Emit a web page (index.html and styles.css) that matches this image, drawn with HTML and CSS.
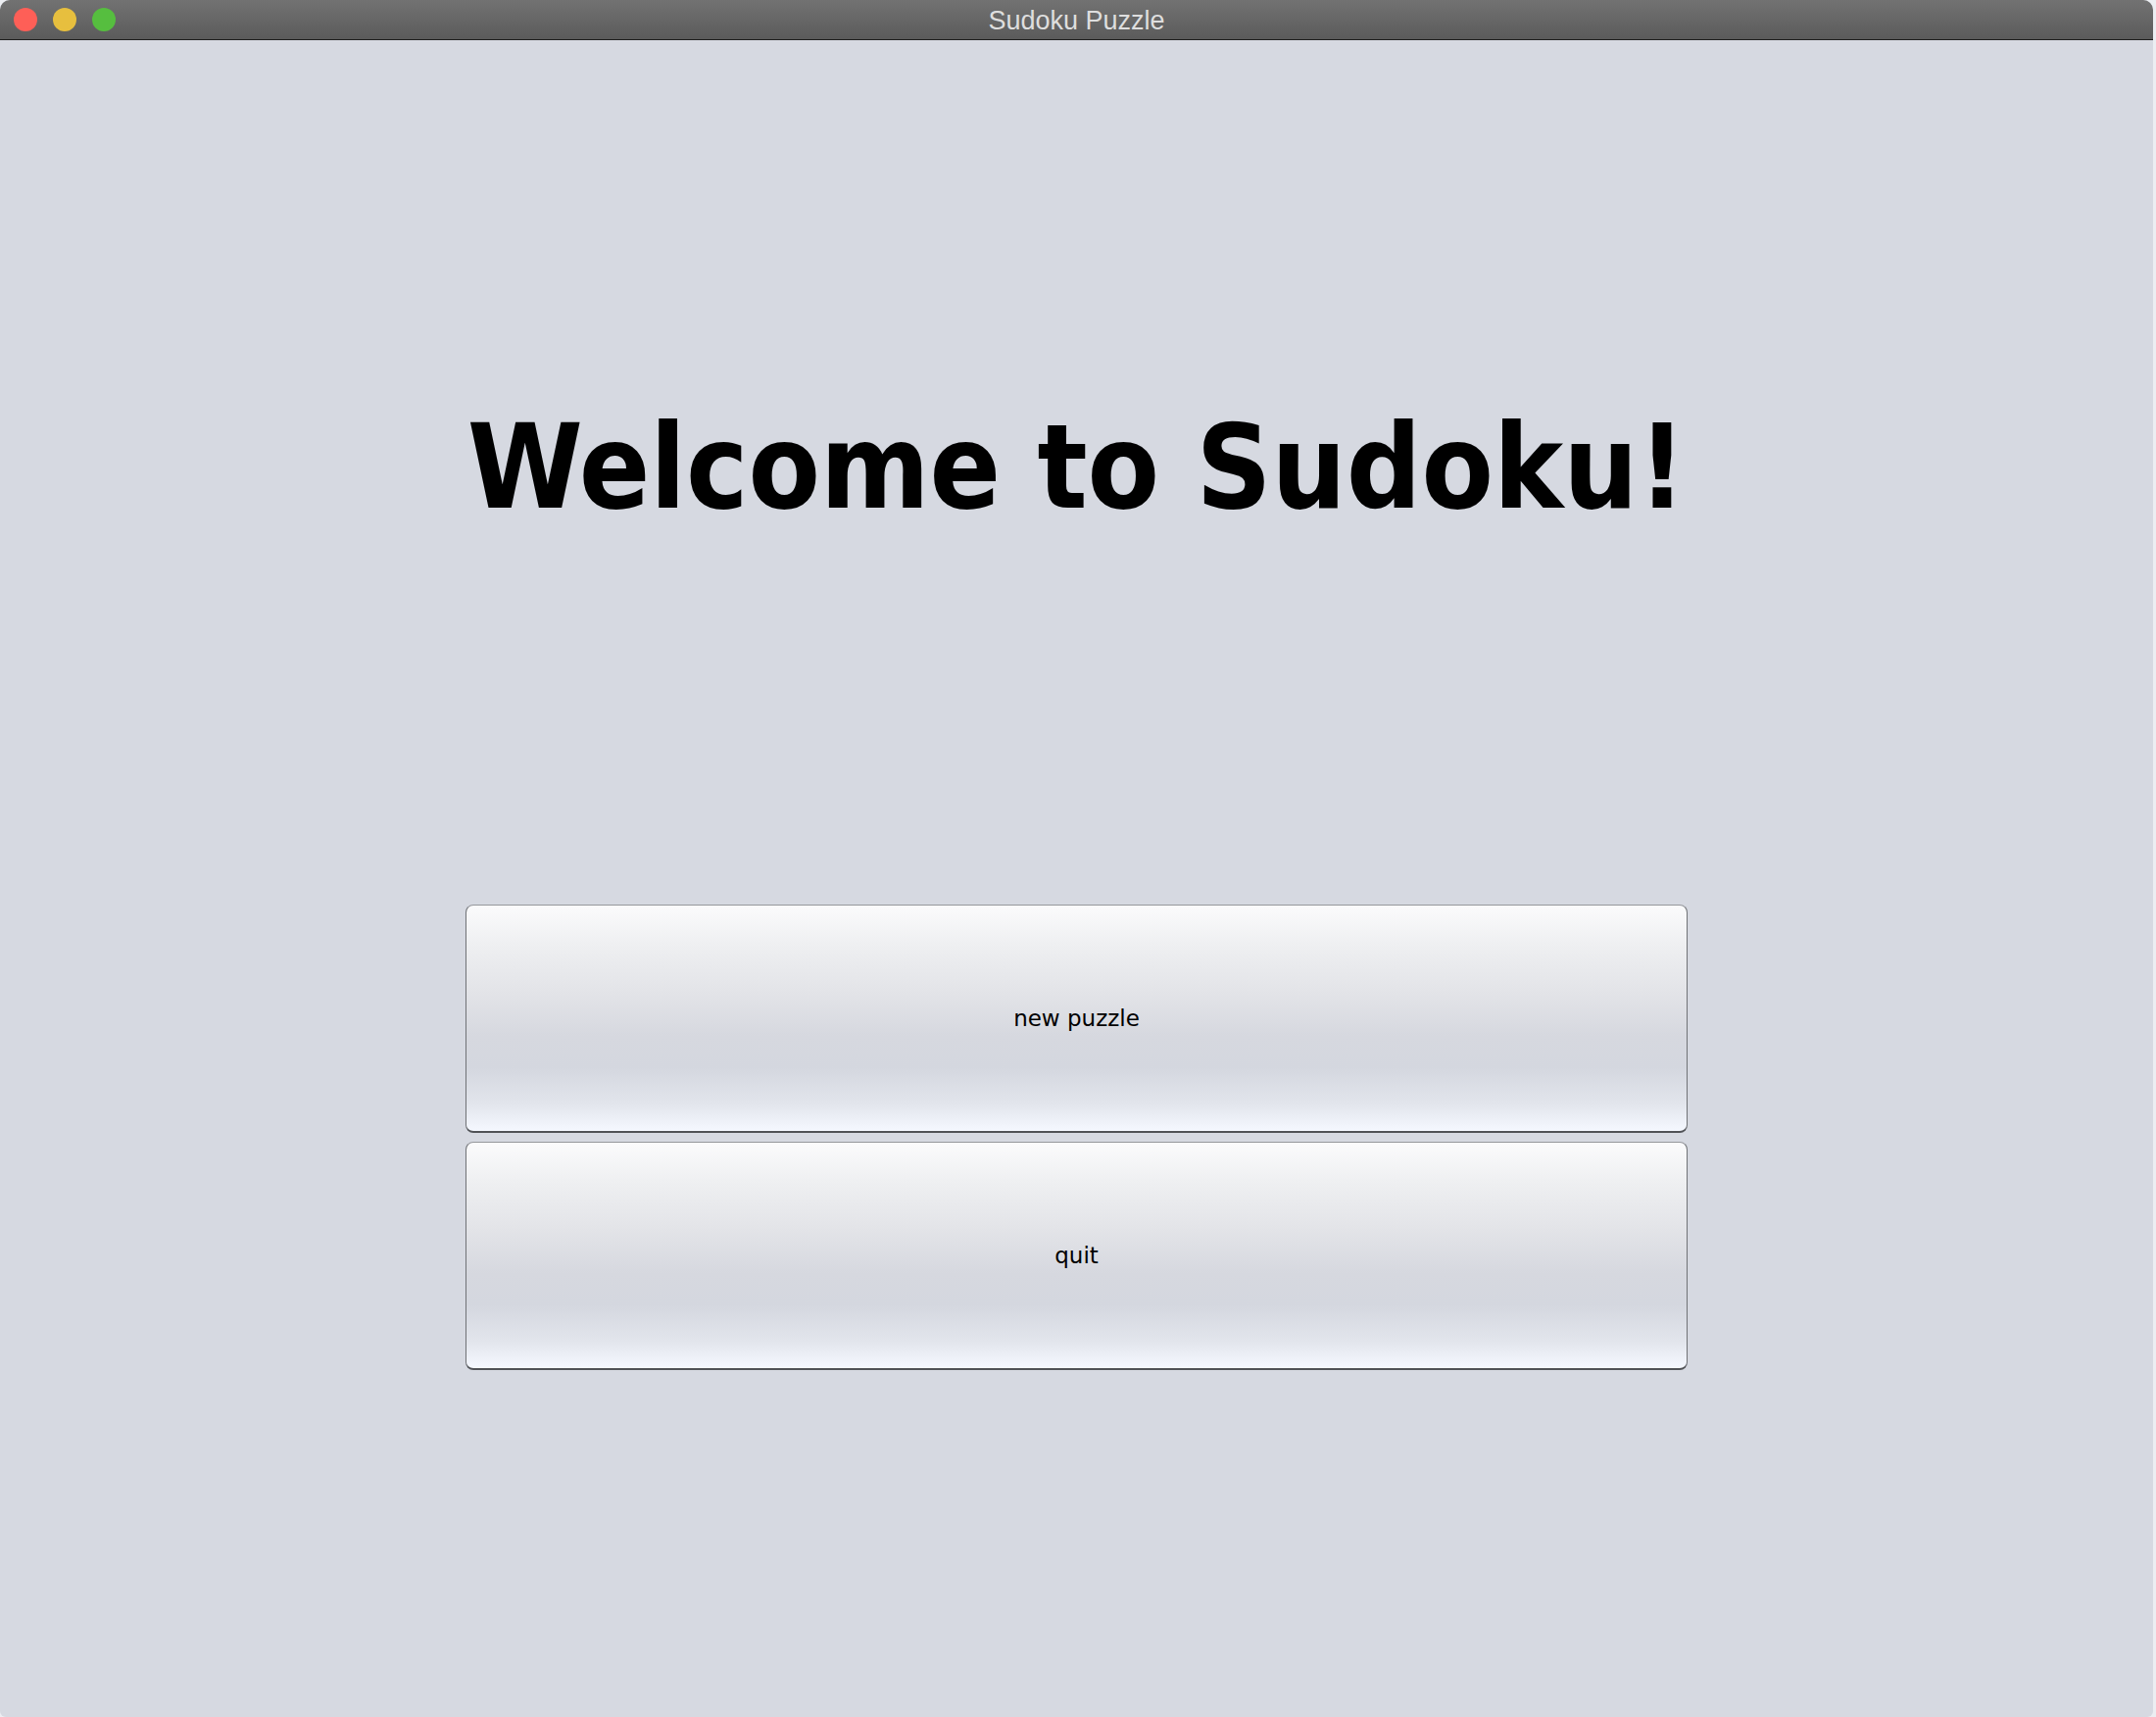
FILE: index.html
```html
<!DOCTYPE html>
<html>
<head>
<meta charset="utf-8">
<title>Sudoku Puzzle</title>
<link rel="stylesheet" href="styles.css">
</head>
<body>
<div class="window">
  <div class="titlebar">
    <div class="lights">
      <span class="light red"></span>
      <span class="light yellow"></span>
      <span class="light green"></span>
    </div>
    <div class="title">Sudoku Puzzle</div>
  </div>
  <main class="content">
    <h1 class="heading">Welcome to Sudoku!</h1>
    <div class="buttons">
      <button class="btn">new puzzle</button>
      <button class="btn">quit</button>
    </div>
  </main>
</div>
</body>
</html>
```

FILE: styles.css
```css
html, body {
  margin: 0;
  padding: 0;
}
body {
  width: 2200px;
  height: 1752px;
  background: #eceef2;
  overflow: hidden;
}
.window {
  width: 2197px;
  height: 1752px;
  background: #d6d9e1;
  border-radius: 10px 10px 6px 6px;
  overflow: hidden;
  display: flex;
  flex-direction: column;
}
.titlebar {
  height: 40px;
  flex: 0 0 40px;
  border-bottom: 1px solid #1f1f1f;
  background: linear-gradient(#727272, #5b5b5b);
  display: flex;
  align-items: center;
  position: relative;
}
.lights {
  display: flex;
  gap: 16px;
  padding-left: 14px;
}
.light {
  width: 24px;
  height: 24px;
  border-radius: 50%;
  display: block;
}
.red { background: #fe5f57; }
.yellow { background: #e7bf3e; }
.green { background: #56be3f; }
.title {
  position: absolute;
  left: 0;
  right: 0;
  top: 0;
  line-height: 42px;
  text-align: center;
  font-family: "Liberation Sans", Arial, sans-serif;
  font-size: 27px;
  color: #dedede;
}
.content {
  flex: 1;
  display: flex;
  flex-direction: column;
  align-items: center;
}
.heading {
  margin: 376px 0 0 0;
  font-family: "DejaVu Sans Condensed", "DejaVu Sans", sans-serif;
  font-weight: bold;
  font-size: 119px;
  line-height: 120px;
  color: #000;
  white-space: nowrap;
}
.buttons {
  margin-top: 386px;
  width: 1247px;
  display: flex;
  flex-direction: column;
  gap: 9px;
}
.btn {
  height: 233px;
  width: 100%;
  box-sizing: border-box;
  border: 1px solid;
  border-color: #96989c #707276 #505256 #707276;
  border-bottom-width: 2px;
  border-radius: 8px;
  background: linear-gradient(#fbfbfc 0%, #eeeff1 18%, #e3e4e8 38%, #d6d8df 58%, #d4d7df 72%, #e2e5ec 88%, #f5f8ff 100%);
  font-family: "DejaVu Sans", sans-serif;
  font-size: 23px;
  color: #000;
  padding: 0;
  margin: 0;
}
```
